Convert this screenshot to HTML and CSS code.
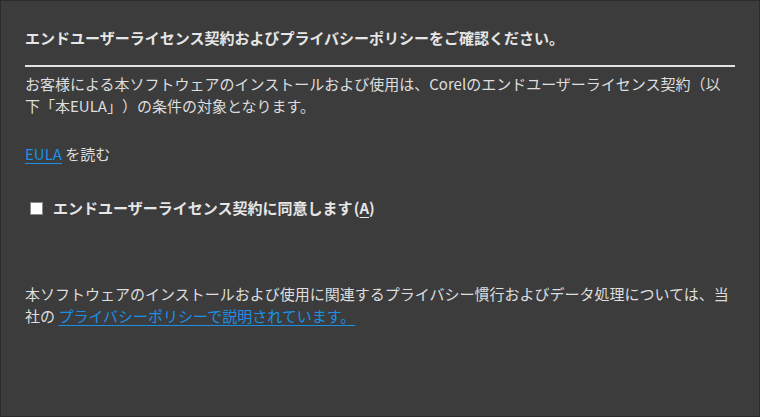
FILE: index.html
```html
<!DOCTYPE html>
<html lang="ja">
<head>
<meta charset="utf-8">
<title>EULA</title>
<link rel="stylesheet" href="styles.css">
</head>
<body>
<div class="dialog">
  <h1 class="title">エンドユーザーライセンス契約およびプライバシーポリシーをご確認ください。</h1>
  <hr class="rule">
  <p class="text">お客様による本ソフトウェアのインストールおよび使用は、Corelのエンドユーザーライセンス契約（以下「本EULA」）の条件の対象となります。</p>
  <p class="text read"><a class="link" href="#">EULA</a> を読む</p>
  <label class="agree">
    <span class="box"></span>
    <span class="agree-text">エンドユーザーライセンス契約に同意します (<u>A</u>)</span>
  </label>
  <p class="text privacy">本ソフトウェアのインストールおよび使用に関連するプライバシー慣行およびデータ処理については、当社の <a class="link" href="#">プライバシーポリシーで説明されています。</a></p>
</div>
</body>
</html>
```

FILE: styles.css
```css
html, body {
  margin: 0;
  padding: 0;
  background: #3c3c3c;
}
.dialog {
  width: 760px;
  height: 417px;
  box-sizing: border-box;
  border: 1px solid #2b2b2b;
  background: #3c3c3c;
  padding: 26px 24px 0 24px;
  font-family: "Noto Sans CJK JP", "Noto Sans", sans-serif;
  font-size: 15px;
  line-height: 22px;
  color: #dedede;
  text-spacing-trim: space-all;
}
.title {
  margin: 0;
  font-size: 15px;
  line-height: 22px;
  font-weight: bold;
  color: #e6e6e6;
}
.rule {
  margin: 16px 0 0 0;
  border: 0;
  height: 2px;
  background: #e4e4e4;
}
.text {
  margin: 6px 0 0 0;
}
.read {
  margin-top: 26px;
}
.link {
  color: #1a90e6;
  text-decoration: underline;
  text-underline-offset: 3px;
}
.agree {
  display: flex;
  align-items: center;
  margin-top: 32px;
  padding-left: 5px;
  height: 22px;
  font-weight: bold;
  color: #e6e6e6;
}
.box {
  width: 11px;
  height: 11px;
  background: #ffffff;
  border: 1px solid #8a8a8a;
  margin-right: 10px;
}
.agree-text {
  word-spacing: -2px;
}
.agree-text u {
  text-underline-offset: 3px;
}
.privacy {
  margin-top: 64px;
}
```
